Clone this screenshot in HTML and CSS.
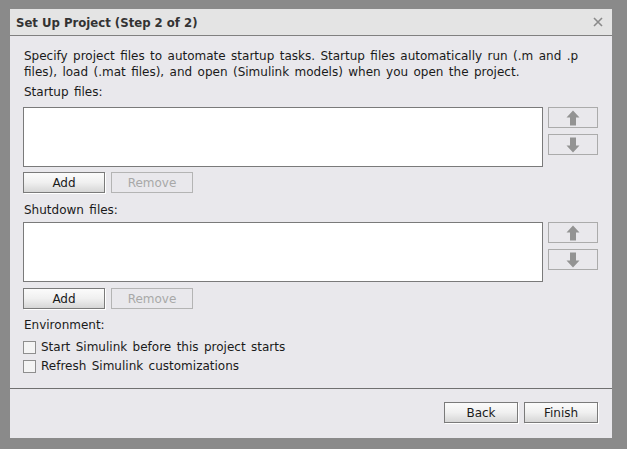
FILE: index.html
```html
<!DOCTYPE html>
<html>
<head>
<meta charset="utf-8">
<link rel="stylesheet" href="styles.css">
</head>
<body>
<div class="dialog">
  <div class="titlebar">
    <span class="title">Set Up Project (Step 2 of 2)</span>
    <svg class="close" width="10" height="10" viewBox="0 0 10 10"><path d="M1 1L9 9M9 1L1 9" stroke="#8a8a8a" stroke-width="1.6"/></svg>
  </div>
  <div class="content">
    <p class="desc">Specify project files to automate startup tasks. Startup files automatically run (.m and .p files), load (.mat files), and open (Simulink models) when you open the project.</p>
    <div class="label first">Startup files:</div>
    <div class="filerow">
      <div class="listbox"></div>
      <div class="arrows">
        <div class="arrowbtn"><svg width="14" height="16" viewBox="0 0 14 16"><path d="M7 0.5L13.5 7.5H10V15.5H4V7.5H0.5Z" fill="#939393"/></svg></div>
        <div class="arrowbtn"><svg width="14" height="16" viewBox="0 0 14 16"><path d="M7 15.5L13.5 8.5H10V0.5H4V8.5H0.5Z" fill="#939393"/></svg></div>
      </div>
    </div>
    <div class="btnrow">
      <button class="btn">Add</button>
      <button class="btn disabled">Remove</button>
    </div>
    <div class="label">Shutdown files:</div>
    <div class="filerow second">
      <div class="listbox"></div>
      <div class="arrows">
        <div class="arrowbtn"><svg width="14" height="16" viewBox="0 0 14 16"><path d="M7 0.5L13.5 7.5H10V15.5H4V7.5H0.5Z" fill="#939393"/></svg></div>
        <div class="arrowbtn"><svg width="14" height="16" viewBox="0 0 14 16"><path d="M7 15.5L13.5 8.5H10V0.5H4V8.5H0.5Z" fill="#939393"/></svg></div>
      </div>
    </div>
    <div class="btnrow second">
      <button class="btn">Add</button>
      <button class="btn disabled">Remove</button>
    </div>
    <div class="label env">Environment:</div>
    <label class="check"><span class="box"></span>Start Simulink before this project starts</label>
    <label class="check"><span class="box"></span>Refresh Simulink customizations</label>
  </div>
  <div class="footer">
    <button class="btn wide">Back</button>
    <button class="btn wide">Finish</button>
  </div>
</div>
</body>
</html>
```
FILE: styles.css
```css
html, body {
  margin: 0;
  padding: 0;
  background: #8a8a8a;
}
body {
  padding: 9px 15px 11px 10px;
  font-family: "DejaVu Sans", sans-serif;
  font-size: 12px;
  color: #1a1a1a;
}
.dialog {
  width: 602px;
  height: 429px;
  background: #e9e8ec;
  display: flex;
  flex-direction: column;
}
.titlebar {
  height: 26px;
  background: #e4e4e4;
  border-bottom: 1px solid #808080;
  display: flex;
  align-items: center;
  justify-content: space-between;
  padding: 0 9px 0 6px;
}
.title {
  font-family: "DejaVu Sans Condensed", "DejaVu Sans", sans-serif;
  font-weight: bold;
  font-size: 13px;
  color: #333;
}
.content {
  padding: 12px 14px 0 13px;
  display: flex;
  flex-direction: column;
  flex: 1;
  word-spacing: 1.6px;
}
.desc {
  margin: 0;
  line-height: 16px;
  padding-left: 1px;
}
.label {
  line-height: 16px;
  margin-top: 4px;
  padding-left: 1px;
}
.filerow {
  display: flex;
  margin-top: 7px;
}
.filerow.second { margin-top: 4px; }
.listbox {
  width: 518px;
  height: 58px;
  background: #fff;
  border: 1px solid #7a7a7a;
}
.arrows {
  margin-left: 5px;
  display: flex;
  flex-direction: column;
  gap: 6px;
}
.arrowbtn {
  width: 48px;
  height: 19px;
  border: 1px solid #ababab;
  display: flex;
  align-items: center;
  justify-content: center;
}
.btnrow {
  display: flex;
  gap: 6px;
  margin-top: 5px;
  margin-bottom: 5px;
}
.btnrow.second { margin-top: 6px; }
.btn {
  width: 82px;
  height: 21px;
  font-family: "DejaVu Sans", sans-serif;
  font-size: 12px;
  color: #1a1a1a;
  border: 1px solid #7a7a7a;
  background: linear-gradient(#fbfbfb, #f0f0f0 50%, #d6d6d6);
  box-shadow: 1px 1px 0 #fff;
  padding: 0;
  border-radius: 0;
}
.btn.disabled {
  border-color: #b4b4b4;
  background: transparent;
  box-shadow: none;
  color: #a8a8a8;
}
.label.env { margin-top: 3px; }
.check {
  display: flex;
  align-items: center;
  line-height: 16px;
  margin-top: 3px;
}
.label.env + .check { margin-top: 6px; }
.box {
  width: 11px;
  height: 11px;
  border: 1px solid #8e8e8e;
  background: #f4f4f4;
  margin-right: 5px;
}
.footer {
  border-top: 1px solid #707070;
  height: 50px;
  box-sizing: border-box;
  display: flex;
  justify-content: flex-end;
  align-items: flex-start;
  gap: 6px;
  padding: 13px 14px 0 0;
}
.btn.wide {
  width: 74px;
}
```
